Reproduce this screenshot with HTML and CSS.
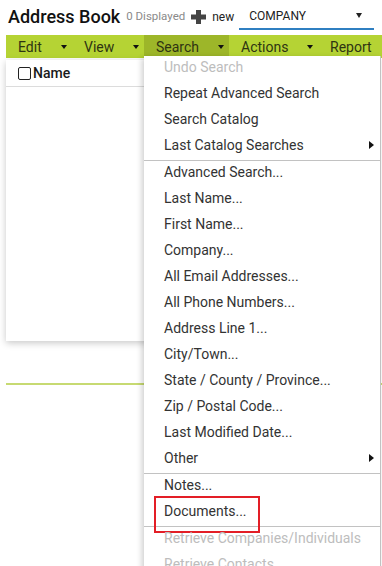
FILE: index.html
```html
<!DOCTYPE html>
<html>
<head>
<meta charset="utf-8">
<link rel="stylesheet" href="styles.css">
</head>
<body>
<header class="topbar">
  <h1 class="title">Address Book</h1>
  <span class="count">0 Displayed</span>
  <a class="new-link">
    <svg class="plus" width="15" height="14" viewBox="0 0 15 14"><rect x="5" y="0" width="5" height="14" fill="#444"/><rect x="0" y="4.5" width="15" height="5" fill="#444"/></svg>
    <span>new</span>
  </a>
  <div class="select"><span>COMPANY</span><span class="select-caret"></span></div>
</header>
<nav class="menubar">
  <div class="bar-item bar-edit">Edit<span class="caret"></span></div>
  <div class="bar-item bar-view">View<span class="caret"></span></div>
  <div class="bar-item bar-search active">Search<span class="caret"></span></div>
  <div class="bar-item bar-actions">Actions<span class="caret"></span></div>
  <div class="bar-item bar-report">Report</div>
</nav>
<main class="content">
  <section class="card">
    <div class="card-head"><span class="checkbox"></span><span class="col-name">Name</span></div>
  </section>
  <div class="footer-line"></div>
  <div class="dropdown">
    <ul class="menu-group">
      <li class="entry disabled">Undo Search</li>
      <li class="entry">Repeat Advanced Search</li>
      <li class="entry">Search Catalog</li>
      <li class="entry sub">Last Catalog Searches<span class="sub-arrow"></span></li>
    </ul>
    <ul class="menu-group">
      <li class="entry">Advanced Search...</li>
      <li class="entry">Last Name...</li>
      <li class="entry">First Name...</li>
      <li class="entry">Company...</li>
      <li class="entry">All Email Addresses...</li>
      <li class="entry">All Phone Numbers...</li>
      <li class="entry">Address Line 1...</li>
      <li class="entry">City/Town...</li>
      <li class="entry">State / County / Province...</li>
      <li class="entry">Zip / Postal Code...</li>
      <li class="entry">Last Modified Date...</li>
      <li class="entry sub">Other<span class="sub-arrow"></span></li>
    </ul>
    <ul class="menu-group">
      <li class="entry">Notes...</li>
      <li class="entry marked">Documents...</li>
    </ul>
    <ul class="menu-group">
      <li class="entry disabled">Retrieve Companies/Individuals</li>
      <li class="entry disabled">Retrieve Contacts</li>
    </ul>
  </div>
</main>
</body>
</html>
```
FILE: styles.css
```css
* { box-sizing: border-box; }
html, body {
  margin: 0;
  padding: 0;
  width: 382px;
  height: 566px;
  overflow: hidden;
  background: #fff;
  font-family: Roboto, "Liberation Sans", sans-serif;
  color: #333;
}

.topbar {
  display: flex;
  align-items: flex-start;
  height: 35px;
  padding-left: 8px;
}
.title {
  margin: 8px 0 0 0;
  font-size: 18px;
  line-height: 18px;
  font-weight: 500;
  color: #111;
}
.count {
  margin: 10px 0 0 6px;
  font-size: 11.5px;
  line-height: 13px;
  color: #8a8a8a;
}
.new-link {
  display: flex;
  align-items: center;
  margin: 10px 0 0 6px;
  font-size: 12px;
  line-height: 14px;
  color: #222;
}
.plus { display: block; margin-right: 6px; }
.select {
  display: flex;
  align-items: center;
  justify-content: space-between;
  width: 135px;
  height: 26px;
  margin: 4px 0 0 5px;
  padding: 0 12px 1px 10px;
  border-bottom: 2px solid #2f7fc1;
  font-size: 12px;
  color: #222;
}
.select-caret {
  width: 0; height: 0;
  border-left: 3.5px solid transparent;
  border-right: 3.5px solid transparent;
  border-top: 5px solid #222;
}

.menubar {
  display: flex;
  height: 23px;
  margin-left: 6px;
  background: #b5d334;
}
.bar-item {
  display: flex;
  align-items: center;
  padding: 1px 5px 0 12px;
  font-size: 14px;
  line-height: 22px;
  color: #2e3312;
}
.bar-item.active { background: #9db629; }
.bar-edit { width: 66px; }
.bar-view { width: 72px; }
.bar-search { width: 85px; }
.bar-actions { width: 89px; }
.caret {
  margin-left: auto;
  width: 0; height: 0;
  border-left: 3.5px solid transparent;
  border-right: 3.5px solid transparent;
  border-top: 4px solid #111;
}

.content { position: relative; }
.card {
  width: 220px;
  height: 281px;
  margin: 2px 0 0 6px;
  background: #fff;
  box-shadow: 0 2px 7px rgba(0,0,0,0.22);
}
.card-head {
  display: flex;
  align-items: center;
  height: 27px;
  padding-left: 12px;
  border-bottom: 1px solid #dcdcdc;
}
.checkbox {
  width: 13px;
  height: 13px;
  border: 1.5px solid #222;
  border-radius: 2px;
  margin-right: 2px;
}
.col-name {
  font-size: 14px;
  font-weight: 500;
  color: #1a1a1a;
}
.footer-line {
  height: 2px;
  margin: 42px 0 0 6px;
  background: #c7da72;
}

.dropdown {
  position: absolute;
  top: -4px;
  left: 144px;
  width: 237px;
  background: #fff;
  border-right: 1px solid #c2c2c2;
  box-shadow: -2px 2px 6px rgba(0,0,0,0.2);
}
.menu-group {
  list-style: none;
  margin: 0;
  padding: 0;
}
.menu-group + .menu-group { border-top: 1px solid #c2c2c2; }
.entry {
  position: relative;
  display: flex;
  align-items: center;
  justify-content: space-between;
  height: 26px;
  padding: 0 6px 4px 20px;
  font-size: 14px;
  color: #333;
  white-space: nowrap;
}
.entry.disabled { color: #bdbdbd; }
.sub-arrow {
  width: 0; height: 0;
  border-top: 4px solid transparent;
  border-bottom: 4px solid transparent;
  border-left: 5px solid #111;
}
.entry.marked::after {
  content: "";
  position: absolute;
  left: 10px;
  top: -4px;
  width: 102px;
  height: 33px;
  border: 2px solid #e31e26;
}
```
